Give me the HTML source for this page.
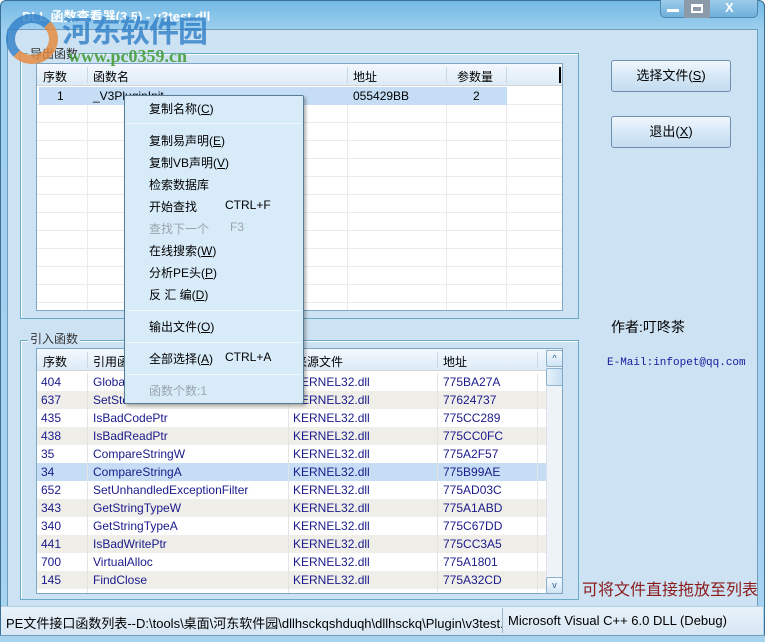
<!DOCTYPE html>
<html><head><meta charset="utf-8"><style>
*{margin:0;padding:0;box-sizing:border-box}
body{width:765px;height:642px;overflow:hidden;font-family:"Liberation Sans","Noto Sans CJK SC",sans-serif;font-size:12px;background:#fff;position:relative}
.a{position:absolute}
.win{left:0;top:0;width:765px;height:642px;background:linear-gradient(#74b9e4,#9fd0ef 30px,#a7d3ef);border:1px solid #3a6e92;border-radius:6px 6px 0 0}
.client{left:7px;top:29px;width:751px;height:606px;background:#cde2f3;border:1px solid #6f9cbb}
.grp{border:1px solid #6aaac8;box-shadow:inset 1px 1px 0 #fff}
.list{background:#fff;border:1px solid #7fa7c4;overflow:hidden}
.hdr{background:linear-gradient(#f4f9fd,#dcebf7);height:22px;border-bottom:1px solid #d5d5d5}
.hc{position:absolute;top:4px;font-size:12px;color:#000}
.vs{position:absolute;top:3px;width:1px;height:16px;background:#c9d8e4}
.row{position:absolute;left:0;width:524px;height:18px;font-size:12px;line-height:18px}
.row span{position:absolute;top:0}
.btn{border:1px solid #6f8fae;border-radius:3px;background:linear-gradient(#f0f7fd,#d6e8f6 50%,#c4dcf0);text-align:center;font-size:13px;line-height:30px}
.menu{left:124px;top:95px;width:180px;height:309px;background:#d8ebf9;border:1px solid #5b7c95;box-shadow:2px 2px 3px rgba(0,0,0,.3);border-radius:2px}
.mi{position:absolute;left:24px;font-size:12px;color:#000}
.mi.d{color:#9aa4ad}
.sep{position:absolute;left:2px;width:174px;height:1px;background:#b5cbe0;border-bottom:1px solid #f0f7fd}
u{text-decoration:underline}
</style></head><body>
<div class="a win"></div>
<div class="a" style="left:22px;top:6px;width:300px;height:20px;color:#fff;font-size:13px;font-weight:bold">DLL 函数查看器(3.5) - v3test.dll</div>
<!-- title buttons -->
<div class="a" style="left:660px;top:0;width:98px;height:18px;border:1px solid #4f86ad;border-top:none;border-radius:0 0 5px 5px;background:linear-gradient(#9ccbe9,#6fb0dc)"></div>
<div class="a" style="left:684px;top:0;width:26px;height:18px;background:#8a9aa8"></div>
<div class="a" style="left:667px;top:9px;width:12px;height:3px;background:#fff"></div>
<div class="a" style="left:691px;top:4px;width:12px;height:9px;border:2px solid #fff;border-top-width:3px"></div>
<div class="a" style="left:725px;top:0;color:#fff;font-weight:bold;font-size:13px">X</div>
<div class="a client"></div>

<!-- export group -->
<div class="a grp" style="left:20px;top:53px;width:559px;height:266px"></div>
<div class="a" style="left:28px;top:45px;background:#cde2f3;padding:0 2px;font-size:12px;color:#333">导出函数</div>
<div class="a list" style="left:36px;top:63px;width:527px;height:248px">
 <div class="hdr"></div>
 <span class="hc" style="left:6px">序数</span><div class="vs" style="left:50px"></div>
 <span class="hc" style="left:56px">函数名</span><div class="vs" style="left:310px"></div>
 <span class="hc" style="left:316px">地址</span><div class="vs" style="left:409px"></div>
 <span class="hc" style="left:420px">参数量</span><div class="vs" style="left:469px"></div>
 <div style="position:absolute;left:522px;top:3px;width:2px;height:16px;background:#000"></div>
 <div style="position:absolute;left:0;top:23px;width:527px;height:225px;background:repeating-linear-gradient(#fff 0 17px,#ebebeb 17px 18px)"></div>
 <div style="position:absolute;left:50px;top:23px;width:1px;height:225px;background:#ebebeb"></div>
 <div style="position:absolute;left:310px;top:23px;width:1px;height:225px;background:#ebebeb"></div>
 <div style="position:absolute;left:409px;top:23px;width:1px;height:225px;background:#ebebeb"></div>
 <div style="position:absolute;left:469px;top:23px;width:1px;height:225px;background:#ebebeb"></div>
 <div class="row" style="top:23px;left:2px;width:468px;background:#c5def5;color:#000"><span style="left:18px">1</span><span style="left:54px">_V3PluginInit</span><span style="left:314px">055429BB</span><span style="left:434px">2</span></div>
</div>

<!-- watermark (over everything) -->
<div class="a" style="left:6px;top:14px;width:52px;height:50px;border-radius:50%;border:9px solid #2f7fc8;border-right-color:#e8883a;border-bottom-color:#e8883a;opacity:.8"></div>
<div class="a" style="left:62px;top:9px;font-size:30px;font-weight:bold;color:#2f7fc8;font-family:'Noto Sans CJK SC',sans-serif;opacity:.8;line-height:40px;letter-spacing:-1px">河东软件园</div>
<div class="a" style="left:68px;top:46px;font-size:18px;font-weight:bold;color:#3f9a30;font-family:'Liberation Serif',serif;opacity:.85">www.pc0359.cn</div>

<!-- buttons -->
<div class="a btn" style="left:611px;top:60px;width:120px;height:32px">选择文件(<u>S</u>)</div>
<div class="a btn" style="left:611px;top:116px;width:120px;height:32px">退出(<u>X</u>)</div>
<div class="a" style="left:611px;top:317px;font-size:14px;color:#000">作者:叮咚茶</div>
<div class="a" style="left:607px;top:357px;font-size:11px;color:#1a1aa0;font-family:'Liberation Mono',monospace">E-Mail:infopet@qq.com</div>

<!-- import group -->
<div class="a grp" style="left:20px;top:340px;width:559px;height:260px"></div>
<div class="a" style="left:28px;top:330px;background:#cde2f3;padding:0 2px;font-size:12px;color:#333">引入函数</div>
<div class="a list" style="left:36px;top:348px;width:527px;height:246px">
 <div class="hdr"></div>
 <span class="hc" style="left:6px">序数</span><div class="vs" style="left:50px"></div>
 <span class="hc" style="left:56px">引用函数</span><div class="vs" style="left:251px"></div>
 <span class="hc" style="left:258px">来源文件</span><div class="vs" style="left:400px"></div>
 <span class="hc" style="left:406px">地址</span><div class="vs" style="left:500px"></div>
 <div id="rows"></div>
 <div style="position:absolute;left:509px;top:0;width:17px;height:246px;background:#eef3f7;border-left:1px solid #dde"></div>
 <div style="position:absolute;left:509px;top:1px;width:17px;height:17px;background:linear-gradient(#f4faff,#cfe4f5);border:1px solid #8db2cf;border-radius:2px;font-size:9px;text-align:center;color:#2a5d8a;line-height:14px">^</div>
 <div style="position:absolute;left:509px;top:19px;width:17px;height:18px;background:linear-gradient(90deg,#e6f2fb,#c6def2);border:1px solid #8db2cf;border-radius:2px"></div>
 <div style="position:absolute;left:509px;top:228px;width:17px;height:17px;background:linear-gradient(#f4faff,#cfe4f5);border:1px solid #8db2cf;border-radius:2px;font-size:9px;text-align:center;color:#2a5d8a;line-height:14px">v</div>
</div>
<div class="a" style="left:582px;top:576px;font-size:16px;color:#8b1a1a;font-family:'Noto Sans CJK SC',sans-serif">可将文件直接拖放至列表</div>

<!-- status bar -->
<div class="a" style="left:1px;top:606px;width:762px;height:29px;background:linear-gradient(#e9f2f9,#d7e7f4);border-top:1px solid #b7cfe2"></div>
<div class="a" style="left:6px;top:613px;width:496px;overflow:hidden;white-space:nowrap;font-size:13px">PE文件接口函数列表--D:\tools\桌面\河东软件园\dllhsckqshduqh\dllhsckq\Plugin\v3test.dll</div>
<div class="a" style="left:502px;top:608px;width:1px;height:25px;background:#9fb6c8"></div>
<div class="a" style="left:508px;top:613px;font-size:13px">Microsoft Visual C++ 6.0 DLL (Debug)</div>
<div class="a" style="left:0;top:635px;width:765px;height:7px;background:#a7d3ef;border-top:1px solid #6f9cbb"></div>

<!-- context menu -->
<div class="a menu">
 <span class="mi" style="top:4px">复制名称(<u>C</u>)</span>
 <div class="sep" style="top:27px"></div>
 <span class="mi" style="top:36px">复制易声明(<u>E</u>)</span>
 <span class="mi" style="top:58px">复制VB声明(<u>V</u>)</span>
 <span class="mi" style="top:80px">检索数据库</span>
 <span class="mi" style="top:102px">开始查找</span><span class="mi" style="top:102px;left:100px">CTRL+F</span>
 <span class="mi d" style="top:124px">查找下一个</span><span class="mi d" style="top:124px;left:105px">F3</span>
 <span class="mi" style="top:146px">在线搜索(<u>W</u>)</span>
 <span class="mi" style="top:168px">分析PE头(<u>P</u>)</span>
 <span class="mi" style="top:190px">反 汇 编(<u>D</u>)</span>
 <div class="sep" style="top:214px"></div>
 <span class="mi" style="top:222px">输出文件(<u>O</u>)</span>
 <div class="sep" style="top:246px"></div>
 <span class="mi" style="top:254px">全部选择(<u>A</u>)</span><span class="mi" style="top:254px;left:100px">CTRL+A</span>
 <div class="sep" style="top:278px"></div>
 <span class="mi d" style="top:286px">函数个数:1</span>
</div>

<script>
var d=[["404","GlobalAlloc","775BA27A"],["637","SetStdHandle","77624737"],["435","IsBadCodePtr","775CC289"],["438","IsBadReadPtr","775CC0FC"],["35","CompareStringW","775A2F57"],["34","CompareStringA","775B99AE"],["652","SetUnhandledExceptionFilter","775AD03C"],["343","GetStringTypeW","775A1ABD"],["340","GetStringTypeA","775C67DD"],["441","IsBadWritePtr","775CC3A5"],["700","VirtualAlloc","775A1801"],["145","FindClose","775A32CD"],["440","LCMapStringA","775C8BA3"]];
var h="";d.forEach(function(r,i){var bg=i==5?"#c5def5":(i%2?"#efeee8":"#fff");
h+='<div class="row" style="top:'+(24+i*18)+'px;background:'+bg+';color:#1a1a8c"><span style="left:4px">'+r[0]+'</span><span style="left:56px">'+r[1]+'</span><span style="left:256px">KERNEL32.dll</span><span style="left:406px">'+r[2]+'</span>'+
'<div style="position:absolute;left:50px;top:0;width:1px;height:18px;background:#e4e4e4"></div><div style="position:absolute;left:251px;top:0;width:1px;height:18px;background:#e4e4e4"></div><div style="position:absolute;left:400px;top:0;width:1px;height:18px;background:#e4e4e4"></div><div style="position:absolute;left:500px;top:0;width:1px;height:18px;background:#e4e4e4"></div></div>';});
document.getElementById("rows").innerHTML=h;
</script>
</body></html>
